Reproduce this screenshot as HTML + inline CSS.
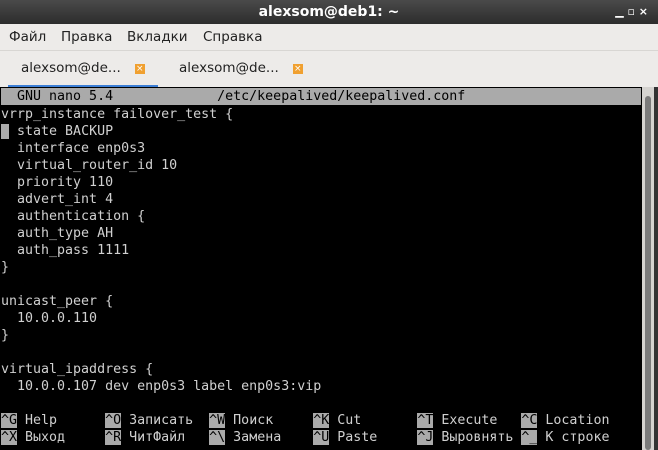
<!DOCTYPE html>
<html><head><meta charset="utf-8"><style>
body{margin:0;width:658px;height:450px;overflow:hidden;background:#e8e6e3;position:relative;font-family:"DejaVu Sans","Liberation Sans",sans-serif}
.title{position:absolute;left:0;top:0;width:658px;height:24px;background:linear-gradient(#4a4a4a,#2c2c2c);color:#fff;font-weight:bold;font-size:14px;text-align:center;line-height:24px}
.menu{position:absolute;top:24px;left:0;width:658px;height:38px;background:#edebe9;font-size:13.5px;color:#222}
.menu span{position:absolute;top:5px}
.tabs{position:absolute;top:50px;left:0;width:658px;height:38px;background:#edebe9;border-top:1px solid #d8d6d3}
.tab{position:absolute;top:9px;font-size:13.5px;color:#222}
.x{display:inline-block;width:10px;height:10px;background:#f0a030;color:#fff;font-size:9px;line-height:10px;text-align:center;margin-left:14px;vertical-align:1px}
.ul{position:absolute;left:8px;top:34px;width:150px;height:3px;background:#3d7fd6}
.term{position:absolute;left:0;top:87px;width:642px;height:363px;background:#000}
.sb{position:absolute;left:642px;top:87px;width:12px;height:363px;background:#d5d3d0}
.thumb{position:absolute;left:645px;top:96px;width:6px;height:354px;background:#7b7b7b;border-radius:3px}
.edge{position:absolute;left:654px;top:87px;width:4px;height:363px;background:#333}
pre{margin:0;position:absolute;left:1px;font-family:"DejaVu Sans Mono","Liberation Mono",monospace;font-size:13.3px;line-height:17px;color:#d0d0d0}
.bar{position:absolute;left:1px;top:88px;width:640px;height:17px;background:#aaa}
.inv{background:#aaa;color:#000}
</style></head><body>
<div class="title">alexsom@deb1: ~<span style="position:absolute;right:10px;font-size:11px">▁ ▫ ×</span></div>
<div class="menu"><span style="left:9px">Файл</span><span style="left:61px">Правка</span><span style="left:127px">Вкладки</span><span style="left:203px">Справка</span></div>
<div class="tabs"><div class="tab" style="left:21px">alexsom@de...<span class="x">×</span></div><div class="tab" style="left:179px">alexsom@de...<span class="x">×</span></div><div class="ul"></div></div>
<div class="term"></div><div class="sb"></div><div class="thumb"></div><div class="edge"></div>
<div class="bar"></div>
<pre style="top:88px;color:#000">  GNU nano 5.4             /etc/keepalived/keepalived.conf</pre>
<pre style="top:106px"><span>vrrp_instance failover_test {</span>
<span class="inv"> </span> state BACKUP
  interface enp0s3
  virtual_router_id 10
  priority 110
  advert_int 4
  authentication {
  auth_type AH
  auth_pass 1111
}

unicast_peer {
  10.0.0.110
}

virtual_ipaddress {
  10.0.0.107 dev enp0s3 label enp0s3:vip

<span class="inv">^G</span> Help      <span class="inv">^O</span> Записать  <span class="inv">^W</span> Поиск     <span class="inv">^K</span> Cut       <span class="inv">^T</span> Execute   <span class="inv">^C</span> Location
<span class="inv">^X</span> Выход     <span class="inv">^R</span> ЧитФайл   <span class="inv">^\</span> Замена    <span class="inv">^U</span> Paste     <span class="inv">^J</span> Выровнять <span class="inv">^_</span> К строке</pre>
</body></html>
